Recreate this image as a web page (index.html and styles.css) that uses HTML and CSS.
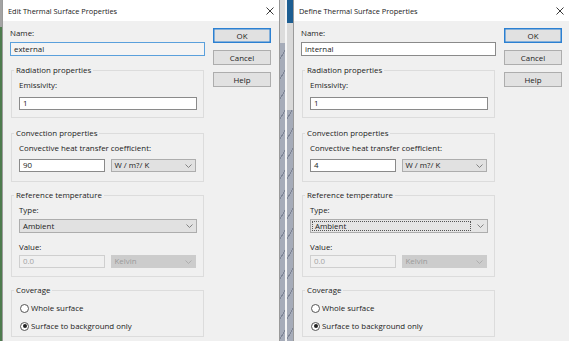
FILE: index.html
```html
<!DOCTYPE html>
<html>
<head>
<meta charset="utf-8">
<title>Thermal Surface Properties</title>
<link rel="stylesheet" href="styles.css">
</head>
<body>
<div class="screen">
  <div class="edge"></div>

  <section class="dialog dlg-left">
    <header class="titlebar">
      <span class="title">Edit Thermal Surface Properties</span>
      <svg class="close" width="8" height="8" viewBox="0 0 8 8"><path d="M0.5 0.5L7.5 7.5M7.5 0.5L0.5 7.5" stroke="#222" stroke-width="0.9" fill="none"/></svg>
    </header>
    <div class="body">
      <div class="form">
        <div class="lbl">Name:</div>
        <div class="input name focused">external</div>

        <fieldset class="group g-rad">
          <legend>Radiation properties</legend>
          <div class="gbody">
            <div class="lbl">Emissivity:</div>
            <div class="input full mt6">1</div>
          </div>
        </fieldset>

        <fieldset class="group g-conv">
          <legend>Convection properties</legend>
          <div class="gbody">
            <div class="lbl">Convective heat transfer coefficient:</div>
            <div class="row mt5">
              <div class="input half">90</div>
              <div class="select half"><span>W / m?/ K</span><svg class="chev" width="7" height="4" viewBox="0 0 7 4"><path d="M0.5 0.5L3.5 3.5L6.5 0.5" stroke="#777" stroke-width="0.9" fill="none"/></svg></div>
            </div>
          </div>
        </fieldset>

        <fieldset class="group g-ref">
          <legend>Reference temperature</legend>
          <div class="gbody">
            <div class="lbl">Type:</div>
            <div class="select full tall mt3"><span>Ambient</span><svg class="chev" width="7" height="4" viewBox="0 0 7 4"><path d="M0.5 0.5L3.5 3.5L6.5 0.5" stroke="#777" stroke-width="0.9" fill="none"/></svg></div>
            <div class="lbl mt8">Value:</div>
            <div class="row mt2">
              <div class="input half disabled">0.0</div>
              <div class="select half disabled"><span>Kelvin</span><svg class="chev" width="7" height="4" viewBox="0 0 7 4"><path d="M0.5 0.5L3.5 3.5L6.5 0.5" stroke="#aaa" stroke-width="0.9" fill="none"/></svg></div>
            </div>
          </div>
        </fieldset>

        <fieldset class="group g-cov">
          <legend>Coverage</legend>
          <div class="gbody radios">
            <div class="radio"><span class="circle"></span>Whole surface</div>
            <div class="radio"><span class="circle checked"><span class="dot"></span></span>Surface to background only</div>
          </div>
        </fieldset>
      </div>

      <div class="buttons">
        <div class="btn default">OK</div>
        <div class="btn">Cancel</div>
        <div class="btn">Help</div>
      </div>
    </div>
  </section>

  <div class="gap">
    <div class="ga"></div>
    <div class="gb"></div>
    <div class="gc"></div>
  </div>

  <section class="dialog dlg-right">
    <header class="titlebar">
      <span class="title">Define Thermal Surface Properties</span>
      <svg class="close" width="8" height="8" viewBox="0 0 8 8"><path d="M0.5 0.5L7.5 7.5M7.5 0.5L0.5 7.5" stroke="#222" stroke-width="0.9" fill="none"/></svg>
    </header>
    <div class="body">
      <div class="form">
        <div class="lbl">Name:</div>
        <div class="input name">internal</div>

        <fieldset class="group g-rad">
          <legend>Radiation properties</legend>
          <div class="gbody">
            <div class="lbl">Emissivity:</div>
            <div class="input full mt6">1</div>
          </div>
        </fieldset>

        <fieldset class="group g-conv">
          <legend>Convection properties</legend>
          <div class="gbody">
            <div class="lbl">Convective heat transfer coefficient:</div>
            <div class="row mt5">
              <div class="input half">4</div>
              <div class="select half"><span>W / m?/ K</span><svg class="chev" width="7" height="4" viewBox="0 0 7 4"><path d="M0.5 0.5L3.5 3.5L6.5 0.5" stroke="#777" stroke-width="0.9" fill="none"/></svg></div>
            </div>
          </div>
        </fieldset>

        <fieldset class="group g-ref">
          <legend>Reference temperature</legend>
          <div class="gbody">
            <div class="lbl">Type:</div>
            <div class="select full tall mt3 focus-sel"><span class="focusbox">Ambient</span><svg class="chev" width="7" height="4" viewBox="0 0 7 4"><path d="M0.5 0.5L3.5 3.5L6.5 0.5" stroke="#777" stroke-width="0.9" fill="none"/></svg></div>
            <div class="lbl mt8">Value:</div>
            <div class="row mt2">
              <div class="input half disabled">0.0</div>
              <div class="select half disabled"><span>Kelvin</span><svg class="chev" width="7" height="4" viewBox="0 0 7 4"><path d="M0.5 0.5L3.5 3.5L6.5 0.5" stroke="#aaa" stroke-width="0.9" fill="none"/></svg></div>
            </div>
          </div>
        </fieldset>

        <fieldset class="group g-cov">
          <legend>Coverage</legend>
          <div class="gbody radios">
            <div class="radio"><span class="circle"></span>Whole surface</div>
            <div class="radio"><span class="circle checked"><span class="dot"></span></span>Surface to background only</div>
          </div>
        </fieldset>
      </div>

      <div class="buttons">
        <div class="btn default">OK</div>
        <div class="btn">Cancel</div>
        <div class="btn">Help</div>
      </div>
    </div>
  </section>
</div>
</body>
</html>
```

FILE: styles.css
```css
* { box-sizing: border-box; }
html, body { margin: 0; padding: 0; }
body {
  width: 569px;
  height: 341px;
  overflow: hidden;
  font-family: "Open Sans", "Noto Sans", sans-serif;
  font-size: 7.9px;
  color: #222;
  background: #a6acb9;
}
.screen { display: flex; height: 341px; overflow: hidden; }
.edge {
  width: 2px;
  flex: none;
  background: linear-gradient(#a3a3a3 0 27px, #4e7b4e 27px);
}
.dialog {
  flex: none;
  display: flex;
  flex-direction: column;
  background: #f0f0f0;
  border-left: 1px solid #9a9a9a;
  border-right: 1px solid #9a9a9a;
}
.dlg-left { width: 278px; }
.dlg-right { width: 277px; }

.titlebar {
  height: 21px;
  flex: none;
  background: #fff;
  display: flex;
  align-items: center;
  justify-content: space-between;
  padding: 0 5px 0 5px;
}
.title { font-size: 7.4px; color: #1a1a1a; line-height: 12px; }
.close { display: block; }

.body {
  flex: 1;
  display: flex;
  align-items: flex-start;
  padding: 6px 0 0 7px;
}
.form { width: 195px; flex: none; }
.buttons {
  width: 58px;
  flex: none;
  margin-left: 8px;
  padding-top: 1px;
  display: flex;
  flex-direction: column;
  gap: 7px;
}
.btn {
  height: 15px;
  border: 1px solid #adadad;
  background: #e1e1e1;
  display: flex;
  align-items: center;
  justify-content: center;
  color: #222;
}
.btn.default { border-color: #2b80d2; box-shadow: inset 0 0 0 0.5px #2b80d2; }

.lbl { line-height: 12px; height: 12px; white-space: nowrap; }
.mt2 { margin-top: 2px; }
.mt3 { margin-top: 3px; }
.mt5 { margin-top: 5px; }
.mt6 { margin-top: 6px; }
.mt8 { margin-top: 8px; }

.input {
  height: 13px;
  border: 1px solid #8a8a8a;
  background: #fff;
  padding: 0 3px;
  display: flex;
  align-items: center;
  line-height: 11px;
  white-space: nowrap;
}
.input.name { margin-top: 3px; height: 14px; }
.input.focused { border-color: #5aa0dc; background: #f4f4f4; }
.input.disabled { border-color: #cfcfcf; background: #f0f0f0; color: #a3a3a3; }
.full { width: 178px; }
.half { width: 86px; }
.row { display: flex; gap: 6px; }

.select {
  height: 13px;
  border: 1px solid #adadad;
  background: #e1e1e1;
  display: flex;
  align-items: center;
  justify-content: space-between;
  padding: 0 3px 0 3px;
  line-height: 11px;
  white-space: nowrap;
}
.select.tall { height: 14px; }
.select.disabled { border-color: #cccccc; background: #cccccc; color: #9a9a9a; }
.chev { display: block; flex: none; }
.focus-sel { padding: 0 3px 0 1px; background: #e5e5e5; }
.focusbox {
  flex: 1;
  height: 10px;
  margin-right: 6px;
  border: 1px dotted #555;
  padding-left: 2px;
  line-height: 8px;
}

.group {
  margin: 0 1px;
  padding: 0;
  border: 1px solid #dcdcdc;
  min-width: 0;
}
.group legend {
  margin-left: 2px;
  padding: 0 2px;
  line-height: 12px;
  height: 12px;
}
.gbody { padding: 3px 7px 7px 7px; }
.g-rad { margin-top: 8px; }
.g-conv { margin-top: 9px; }
.g-conv .gbody { padding-bottom: 9px; }
.g-ref { margin-top: 7px; }
.g-ref .gbody { padding-bottom: 8px; }
.g-cov { margin-top: 7px; }
.radios { padding: 6px 7px 4px 7px; display: flex; flex-direction: column; gap: 6px; }
.radio { display: flex; align-items: center; height: 12px; line-height: 12px; white-space: nowrap; }
.circle {
  width: 9px;
  height: 9px;
  border: 1px solid #555;
  border-radius: 50%;
  background: #fff;
  margin: 0 2px 0 1px;
  flex: none;
  display: flex;
  align-items: center;
  justify-content: center;
}
.dot { width: 4px; height: 4px; border-radius: 50%; background: #222; }

.gap { width: 13px; flex: none; display: flex; }
.ga {
  width: 5px;
  background:
    linear-gradient(#dcdcdc 0 43px, transparent 43px),
    repeating-linear-gradient(120deg, #a6acb9 0 9px, #7e8596 9px 10px);
}
.gb { width: 2px; background: #f6f6f6; }
.gc {
  width: 6px;
  background:
    linear-gradient(#1d5e92 0 23px, #d9d9d9 23px 110px, transparent 110px),
    repeating-linear-gradient(120deg, #a6acb9 0 9px, #7e8596 9px 10px);
}
```
